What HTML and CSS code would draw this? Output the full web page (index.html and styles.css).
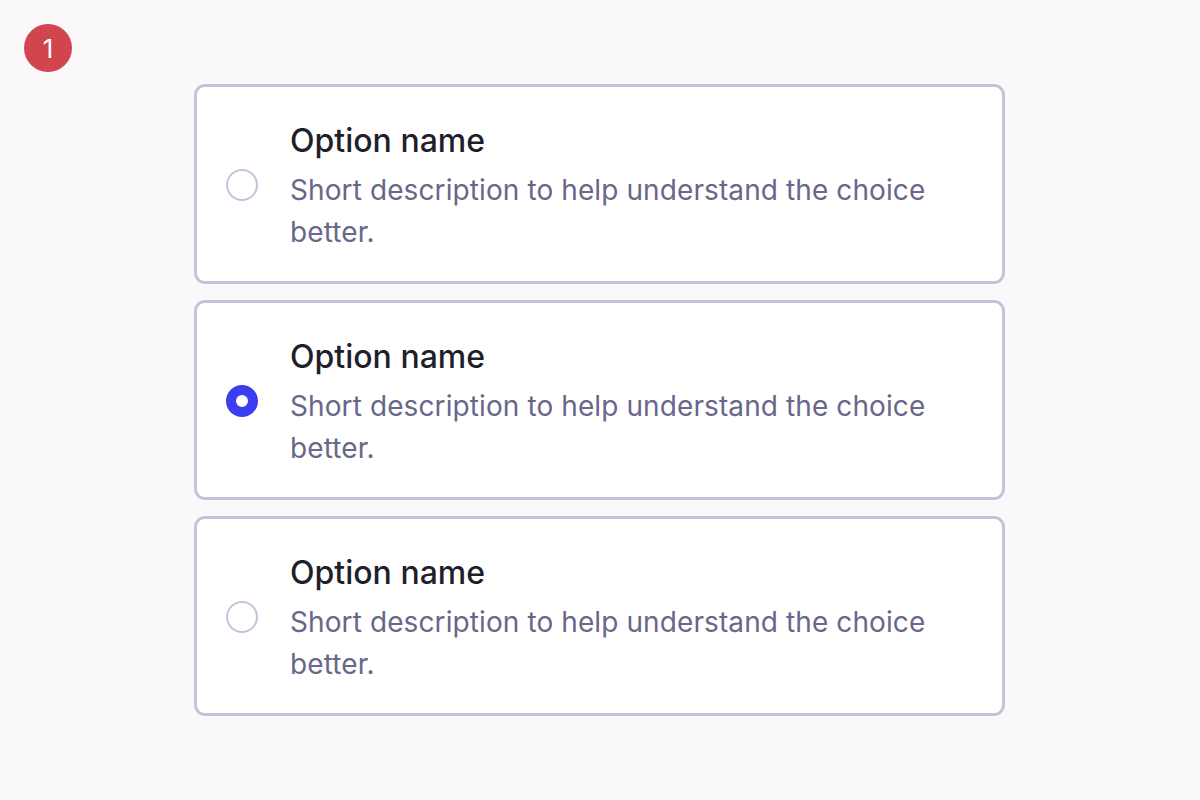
FILE: index.html
```html
<!DOCTYPE html>
<html lang="en">
<head>
<meta charset="utf-8">
<title>Options</title>
<link rel="stylesheet" href="styles.css">
</head>
<body>
<div class="page">
  <div class="badge">1</div>
  <div class="options">
    <label class="card">
      <span class="radio"></span>
      <span class="text">
        <span class="title">Option name</span>
        <span class="desc">Short description to help understand the choice better.</span>
      </span>
    </label>
    <label class="card">
      <span class="radio checked"></span>
      <span class="text">
        <span class="title">Option name</span>
        <span class="desc">Short description to help understand the choice better.</span>
      </span>
    </label>
    <label class="card">
      <span class="radio"></span>
      <span class="text">
        <span class="title">Option name</span>
        <span class="desc">Short description to help understand the choice better.</span>
      </span>
    </label>
  </div>
</div>
</body>
</html>
```

FILE: styles.css
```css
html, body {
  margin: 0;
  padding: 0;
  background: #f9f9f9;
  font-family: Inter, "Noto Sans", sans-serif;
}
.page {
  position: relative;
  width: 1200px;
  height: 800px;
  box-sizing: border-box;
  padding-top: 84px;
}
.badge {
  position: absolute;
  left: 24px;
  top: 24px;
  width: 48px;
  height: 48px;
  border-radius: 50%;
  background: #d1454d;
  color: #fff;
  font-size: 26px;
  display: flex;
  align-items: center;
  justify-content: center;
}
.options {
  width: 811px;
  margin-left: 194px;
  display: flex;
  flex-direction: column;
  gap: 16px;
}
.card {
  display: flex;
  align-items: center;
  gap: 32px;
  background: #fff;
  border: 3px solid #c5c3da;
  border-radius: 11px;
  padding: 32px 29px 28px 29px;
}
.radio {
  flex: none;
  width: 32px;
  height: 32px;
  box-sizing: border-box;
  border: 2px solid #c5c3da;
  border-radius: 50%;
  background: #fff;
  margin-top: -2px;
}
.radio.checked {
  border: 10px solid #3c3cf0;
  background: #fff;
}
.text {
  display: flex;
  flex-direction: column;
  gap: 6px;
}
.title {
  font-size: 32px;
  line-height: 44px;
  font-weight: 500;
  color: #1f1f2b;
}
.desc {
  font-size: 28px;
  line-height: 42px;
  letter-spacing: 0.1px;
  color: #68678a;
  max-width: 680px;
}
```
